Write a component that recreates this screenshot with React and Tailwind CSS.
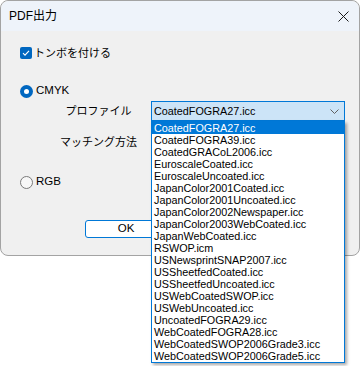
import React from 'react';

const profiles = [
  'CoatedFOGRA27.icc',
  'CoatedFOGRA39.icc',
  'CoatedGRACoL2006.icc',
  'EuroscaleCoated.icc',
  'EuroscaleUncoated.icc',
  'JapanColor2001Coated.icc',
  'JapanColor2001Uncoated.icc',
  'JapanColor2002Newspaper.icc',
  'JapanColor2003WebCoated.icc',
  'JapanWebCoated.icc',
  'RSWOP.icm',
  'USNewsprintSNAP2007.icc',
  'USSheetfedCoated.icc',
  'USSheetfedUncoated.icc',
  'USWebCoatedSWOP.icc',
  'USWebUncoated.icc',
  'UncoatedFOGRA29.icc',
  'WebCoatedFOGRA28.icc',
  'WebCoatedSWOP2006Grade3.icc',
  'WebCoatedSWOP2006Grade5.icc',
];

// Windows 11 style radio
function Radio({ checked, label }) {
  return (
    <div className="h-[16px] flex items-center gap-[3px]">
      {checked ? (
        <div className="w-[13px] h-[13px] rounded-full bg-[#0067c0] flex items-center justify-center">
          <div className="w-[5px] h-[5px] rounded-full bg-white" />
        </div>
      ) : (
        <div className="w-[13px] h-[13px] rounded-full border border-[#7a7a7a] bg-[#f7f7f7]" />
      )}
      <span className="text-[11.5px] text-black">{label}</span>
    </div>
  );
}

export default function App() {
  return (
    <div className="w-[361px] h-[366px] bg-white font-['Liberation_Sans','Noto_Sans_CJK_JP',sans-serif] text-black">
      <div className="w-[360px] h-[256px] rounded-[8px] border border-[#a3a3a3] bg-[#f0f0f0] flex flex-col">
        {/* title bar */}
        <div className="h-[30px] rounded-t-[8px] bg-[#eef3fa] flex items-center justify-between pl-[8px] pr-[10px]">
          <span className="text-[12px]">PDF出力</span>
          <svg width="11" height="11" viewBox="0 0 11 11" className="mt-[1px]">
            <path d="M0.5 0.5L10.5 10.5M10.5 0.5L0.5 10.5" stroke="#1a1a1a" strokeWidth="1" />
          </svg>
        </div>

        <div className="pl-[19px] pt-[14px] flex flex-col">
          <div className="h-[16px] flex items-center gap-[2px]">
            <div className="w-[12px] h-[12px] rounded-[2px] bg-[#0067c0] flex items-center justify-center">
              <svg width="8" height="8" viewBox="0 0 8 8">
                <path d="M1 4.2L3 6.2L7 1.8" fill="none" stroke="white" strokeWidth="1.1" />
              </svg>
            </div>
            <span className="text-[11px]">トンボを付ける</span>
          </div>

          <div className="mt-[22px]">
            <Radio checked label="CMYK" />
          </div>

          <div className="mt-[2px] h-[20px] flex items-center">
            <span className="ml-[36px] w-[85px] text-center text-[11px]">プロファイル</span>
            <div className="relative ml-[10px]">
              <div className="w-[194px] h-[20px] border border-[#0078d7] bg-[#cce4f7] flex items-center justify-between pl-[2px] pr-[5px]">
                <span className="text-[10.8px]">CoatedFOGRA27.icc</span>
                <svg width="9" height="5" viewBox="0 0 9 5">
                  <path d="M0.5 0.5L4.5 4.5L8.5 0.5" fill="none" stroke="#606060" strokeWidth="1" />
                </svg>
              </div>
              {/* open dropdown list */}
              <div className="absolute left-0 top-[20px] z-10 w-[194px] border border-[#0078d7] bg-white shadow-[2px_2px_3px_rgba(0,0,0,0.35)]">
                {profiles.map((p, i) => (
                  <div
                    key={p}
                    className={
                      i === 0
                        ? 'h-[12px] leading-[12px] pl-[2px] text-[10.8px] bg-[#0078d7] text-white'
                        : 'h-[12px] leading-[12px] pl-[2px] text-[10.8px]'
                    }
                  >
                    {p}
                  </div>
                ))}
              </div>
            </div>
          </div>

          <div className="mt-[11px] h-[20px] flex items-center">
            <span className="ml-[36px] w-[85px] text-center text-[11px]">マッチング方法</span>
          </div>

          <div className="mt-[22px]">
            <Radio checked={false} label="RGB" />
          </div>

          <div className="mt-[30px] flex">
            <button className="ml-[65px] w-[82px] h-[18px] rounded-[3px] border border-[#0078d7] bg-white text-[11.5px] leading-none">
              OK
            </button>
          </div>
        </div>
      </div>
    </div>
  );
}
